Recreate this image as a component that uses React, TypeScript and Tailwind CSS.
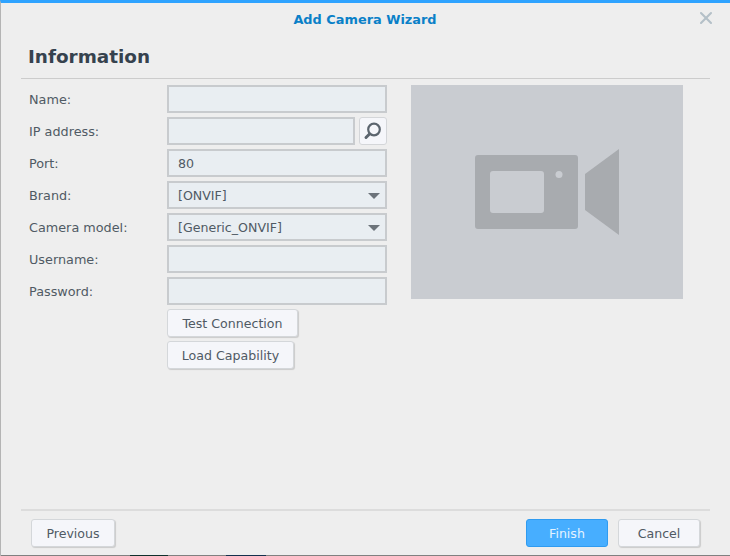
import { X } from "lucide-react"

const fields = [
  { label: "Name:", value: "" },
  { label: "IP address:", value: "", search: true },
  { label: "Port:", value: "80" },
  { label: "Brand:", value: "[ONVIF]", select: true },
  { label: "Camera model:", value: "[Generic_ONVIF]", select: true },
  { label: "Username:", value: "" },
  { label: "Password:", value: "" },
]

function Field({ value, select }: { value: string; select?: boolean }) {
  return (
    <div className="flex h-7 flex-1 items-center justify-between border-2 border-[#c8cbce] bg-[#e9eef2] pt-[2px] pl-[9px] pr-[4px] text-[12.6px] text-[#505a64]">
      <span>{value}</span>
      {select && <span className="mr-[1px] h-0 w-0 border-x-[6px] border-t-[6px] border-x-transparent border-t-[#6c737a]" />}
    </div>
  )
}

function SecondaryButton({ label, className }: { label: string; className: string }) {
  return (
    <button className={`h-7 rounded-[3px] border border-[#d4d7da] bg-[#f5f6fa] pt-[2px] text-[12.6px] text-[#505a64] shadow-[1px_1px_1px_rgba(0,0,0,0.15)] ${className}`}>
      {label}
    </button>
  )
}

export default function App() {
  return (
    <div className="flex h-[556px] w-[730px] flex-col overflow-hidden border-t-[3px] border-l border-t-[#2ea3ff] border-l-[#b4b4b4] bg-[#eeeeee] font-['DejaVu_Sans',sans-serif]">
      <div className="relative h-[31px] pt-[9px] pr-[1px] text-center text-[12.9px] leading-4 font-bold text-[#0a80c8]">
        Add Camera Wizard
        <X className="absolute top-[5px] right-[14px] h-5 w-5 text-[#b4c0c8]" strokeWidth={2.5} />
      </div>

      <div className="mx-[20px] h-[45px] border-b-[1px] border-[#cccccc] pl-[7px] text-[18.4px] leading-[46px] font-bold text-[#36424e]">
        Information
      </div>

      <div className="flex flex-1 pt-[6px] pl-[28px]">
        <div className="flex w-[358px] flex-col gap-1">
          {fields.map((f) => (
            <div key={f.label} className="flex h-7 items-center">
              <label className="w-[138px] pt-[1px] text-[12.8px] text-[#505a64]">{f.label}</label>
              <Field value={f.value} select={f.select} />
              {f.search && (
                <button className="ml-1 flex h-7 w-7 items-center justify-center rounded-[3px] border border-[#d4d6d9] bg-[#f5f6fa]">
                  <svg width="20" height="20" viewBox="0 0 20 20" fill="none" stroke="#5c656e">
                    <circle cx="11" cy="8.500" r="5.800" strokeWidth="2.200" />
                    <path d="M6.500 13 L3 16.500" strokeWidth="3" strokeLinecap="round" />
                  </svg>
                </button>
              )}
            </div>
          ))}
          <div className="pl-[138px]">
            <SecondaryButton label="Test Connection" className="w-[131px]" />
          </div>
          <div className="pl-[138px]">
            <SecondaryButton label="Load Capability" className="w-[127px]" />
          </div>
        </div>
        <div className="ml-[24px] flex h-[214px] w-[272px] items-center justify-center bg-[#c9ccd1]">
          <svg width="144" height="87" viewBox="0 0 144 87" fill="#a8abaf">
            <path
              fillRule="evenodd"
              d="M3 6h97a3 3 0 0 1 3 3v68a3 3 0 0 1-3 3H3a3 3 0 0 1-3-3V9a3 3 0 0 1 3-3Zm15 16a3 3 0 0 0-3 3v36a3 3 0 0 0 3 3h48a3 3 0 0 0 3-3V25a3 3 0 0 0-3-3Z"
            />
            <circle cx="84" cy="25.500" r="3.500" fill="#c9ccd1" />
            <path d="M110 25 L144 0 V86 L110 61 Z" />
          </svg>
        </div>
      </div>

      <div className="mx-[20px] flex h-[46px] items-start justify-between border-t-2 border-[#dcdcdc] px-[10px] pt-[8px]">
        <SecondaryButton label="Previous" className="w-[84px]" />
        <div className="flex gap-[10px]">
          <button className="h-7 w-[82px] rounded-[3px] border border-[#2f9bf0] bg-[#47aeff] pt-[2px] text-[12.6px] text-[#e4f3ff]">Finish</button>
          <SecondaryButton label="Cancel" className="w-[82px]" />
        </div>
      </div>

      {/* sliver of the page behind the dialog */}
      <div className="flex h-px bg-[#808080]">
        <div className="w-[129px]" />
        <div className="w-[38px] bg-[#10302c]" />
        <div className="w-[58px]" />
        <div className="w-[40px] bg-[#14304c]" />
      </div>
    </div>
  )
}
